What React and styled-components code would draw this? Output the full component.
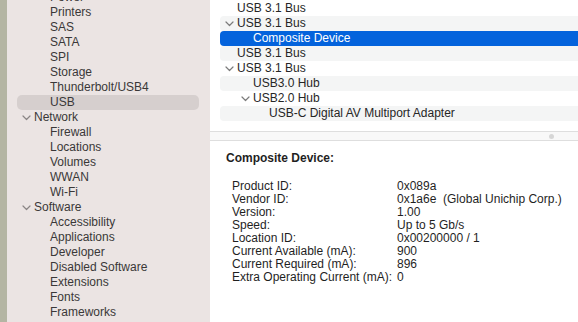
import React from "react";
import styled, { createGlobalStyle } from "styled-components";

const GlobalStyle = createGlobalStyle`
  html, body {
    margin: 0;
    padding: 0;
    overflow: hidden;
    background: #ffffff;
  }
  * {
    box-sizing: border-box;
  }
`;

const Window = styled.div`
  width: 578px;
  height: 322px;
  display: flex;
  overflow: hidden;
  font-family: "Liberation Sans", Arial, sans-serif;
  font-size: 12px;
  color: #262626;
`;

const Strip = styled.div`
  width: 7px;
  flex-shrink: 0;
  background: #b4b5a3;
`;

const Sidebar = styled.div`
  width: 203px;
  flex-shrink: 0;
  background: #ebe4e3;
  overflow: hidden;
`;

const SideList = styled.div`
  margin-top: -10px;
`;

const SideRow = styled.div`
  height: 15px;
  line-height: 15px;
  margin: 0 11px 0 10px;
  border-radius: 5px;
  display: flex;
  align-items: center;
  white-space: nowrap;
  color: #3a3838;
  padding-left: ${(p) => (p.$group ? "5px" : "33px")};
  background: ${(p) => (p.$selected ? "#d6cfce" : "transparent")};
`;

const ChevronSlot = styled.span`
  width: 12px;
  height: 15px;
  flex-shrink: 0;
  display: flex;
  align-items: center;
  justify-content: flex-start;
`;

const Main = styled.div`
  flex: 1;
  display: flex;
  flex-direction: column;
  min-width: 0;
`;

const TreePane = styled.div`
  height: 131px;
  padding-top: 1px;
  overflow: hidden;
`;

const TreeRow = styled.div`
  height: 15px;
  line-height: 15px;
  margin-left: 10px;
  margin-right: -8px;
  border-radius: 4px;
  display: flex;
  align-items: center;
  white-space: nowrap;
  padding-left: ${(p) => 5 + p.$level * 16}px;
  color: ${(p) => (p.$selected ? "#ffffff" : "#262626")};
  background: ${(p) =>
    p.$selected ? "#0463dc" : p.$odd ? "#f4f5f5" : "transparent"};
`;

const Splitter = styled.div`
  height: 10px;
  border-top: 1px solid #dedede;
  border-bottom: 1px solid #dedede;
  background: #f8f8f8;
  display: flex;
  align-items: center;
  justify-content: flex-end;
  padding-right: 24px;
`;

const Grip = styled.span`
  width: 5px;
  height: 5px;
  border-radius: 50%;
  background: #d6d6d6;
`;

const DetailPane = styled.div`
  flex: 1;
  padding: 11px 0 0 16px;
  line-height: 13px;
  color: #1f1f1f;
`;

const DetailTitle = styled.div`
  font-weight: bold;
  margin-bottom: 15px;
`;

const InfoGrid = styled.div`
  display: grid;
  grid-template-columns: 165px 1fr;
  padding-left: 6px;
  white-space: pre;
`;

const Chevron = ({ color = "#7b7b7b" }) => (
  <svg width="9" height="6" viewBox="0 0 9 6">
    <polyline
      points="1,1 4.5,4.5 8,1"
      fill="none"
      stroke={color}
      strokeWidth="1.2"
      strokeLinecap="round"
      strokeLinejoin="round"
    />
  </svg>
);

const SIDEBAR = [
  { label: "Power" },
  { label: "Printers" },
  { label: "SAS" },
  { label: "SATA" },
  { label: "SPI" },
  { label: "Storage" },
  { label: "Thunderbolt/USB4" },
  { label: "USB", selected: true },
  { label: "Network", group: true },
  { label: "Firewall" },
  { label: "Locations" },
  { label: "Volumes" },
  { label: "WWAN" },
  { label: "Wi-Fi" },
  { label: "Software", group: true },
  { label: "Accessibility" },
  { label: "Applications" },
  { label: "Developer" },
  { label: "Disabled Software" },
  { label: "Extensions" },
  { label: "Fonts" },
  { label: "Frameworks" },
];

const TREE = [
  { label: "USB 3.1 Bus", level: 0 },
  { label: "USB 3.1 Bus", level: 0, open: true },
  { label: "Composite Device", level: 1, selected: true },
  { label: "USB 3.1 Bus", level: 0 },
  { label: "USB 3.1 Bus", level: 0, open: true },
  { label: "USB3.0 Hub", level: 1 },
  { label: "USB2.0 Hub", level: 1, open: true },
  { label: "USB-C Digital AV Multiport Adapter", level: 2 },
];

const INFO = [
  ["Product ID:", "0x089a"],
  ["Vendor ID:", "0x1a6e  (Global Unichip Corp.)"],
  ["Version:", "1.00"],
  ["Speed:", "Up to 5 Gb/s"],
  ["Location ID:", "0x00200000 / 1"],
  ["Current Available (mA):", "900"],
  ["Current Required (mA):", "896"],
  ["Extra Operating Current (mA):", "0"],
];

export default function App() {
  return (
    <>
      <GlobalStyle />
      <Window>
        <Strip />
        <Sidebar>
          <SideList>
            {SIDEBAR.map((item, i) => (
              <SideRow key={i} $group={item.group} $selected={item.selected}>
                {item.group && (
                  <ChevronSlot>
                    <Chevron color="#8a8585" />
                  </ChevronSlot>
                )}
                {item.label}
              </SideRow>
            ))}
          </SideList>
        </Sidebar>
        <Main>
          <TreePane>
            {TREE.map((row, i) => (
              <TreeRow
                key={i}
                $level={row.level}
                $odd={i % 2 === 1}
                $selected={row.selected}
              >
                <ChevronSlot>{row.open && <Chevron />}</ChevronSlot>
                {row.label}
              </TreeRow>
            ))}
          </TreePane>
          <Splitter>
            <Grip />
          </Splitter>
          <DetailPane>
            <DetailTitle>Composite Device:</DetailTitle>
            <InfoGrid>
              {INFO.map(([k, v]) => (
                <React.Fragment key={k}>
                  <span>{k}</span>
                  <span>{v}</span>
                </React.Fragment>
              ))}
            </InfoGrid>
          </DetailPane>
        </Main>
      </Window>
    </>
  );
}
